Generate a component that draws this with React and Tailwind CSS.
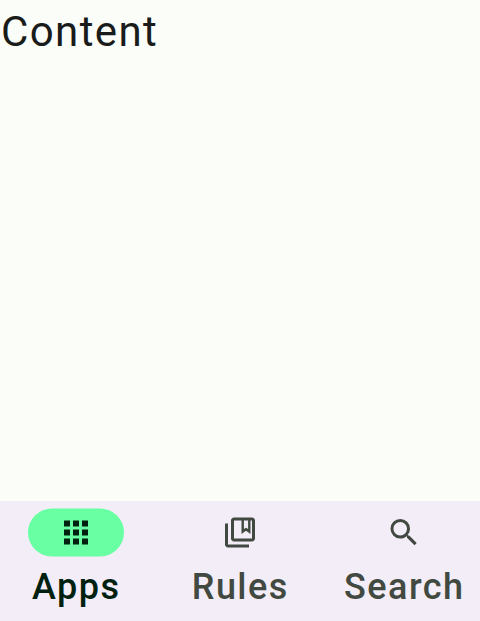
const items = [
  { label: "Apps", active: true, box: "w-[152px]", path: "M4 8h4V4H4v4zm6 12h4v-4h-4v4zm-6 0h4v-4H4v4zm0-6h4v-4H4v4zm6 0h4v-4h-4v4zm6-10v4h4V4h-4zm-6 4h4V4h-4v4zm6 6h4v-4h-4v4zm0 6h4v-4h-4v4z" },
  { label: "Rules", active: false, box: "w-[176px]", path: "M4 6H2v14c0 1.100.9 2 2 2h14v-2H4V6zM20 2H8c-1.100 0-2 .9-2 2v12c0 1.100.9 2 2 2h12c1.100 0 2-.9 2-2V4c0-1.100-.9-2-2-2zm0 14H8V4h5v9l3-2.250L19 13V4h1v12zM14.600 4h2.800v5.700L16 8.750l-1.400.95V4z" },
  { label: "Search", active: false, box: "w-[152px]", path: "M15.500 14h-.79l-.28-.27A6.471 6.471 0 0 0 16 9.500 6.500 6.500 0 1 0 9.500 16c1.610 0 3.090-.59 4.230-1.570l.27.28v.79l5 4.990L20.490 19l-4.990-5zm-6 0C7.010 14 5 11.990 5 9.500S7.010 5 9.500 5 14 7.010 14 9.500 11.990 14 9.500 14z" },
];

export default function App() {
  return (
    <div className="flex h-[621px] w-[480px] flex-col overflow-hidden bg-[#fbfdf8] font-[Roboto,sans-serif]">
      <main className="flex-1 text-[#191c1a]">
        <p className="translate-y-[0.5px] pt-[7px] pl-[1px] text-[42px] leading-[48px] tracking-[1.4px]">Content</p>
      </main>
      <nav className="flex h-[120px] bg-[#f3edf7]">
        {items.map(({ label, active, box, path }) => (
          <button key={label} className={`flex shrink-0 flex-col items-center pt-2 ${box} ${active ? "text-[#002110]" : "text-[#414941]"}`}>
            <span className={`flex h-12 w-24 -translate-y-[0.5px] items-center justify-center rounded-full ${active ? "bg-[#69ffa3]" : ""}`}>
              <svg viewBox="0 0 24 24" className="size-9" fill="currentColor"><path d={path} /></svg>
            </span>
            <span className="mt-2 -translate-y-[0.5px] pl-[0.5px] text-[36px] leading-[44px] font-medium tracking-[1.450px] whitespace-nowrap">{label}</span>
          </button>
        ))}
      </nav>
    </div>
  );
}
